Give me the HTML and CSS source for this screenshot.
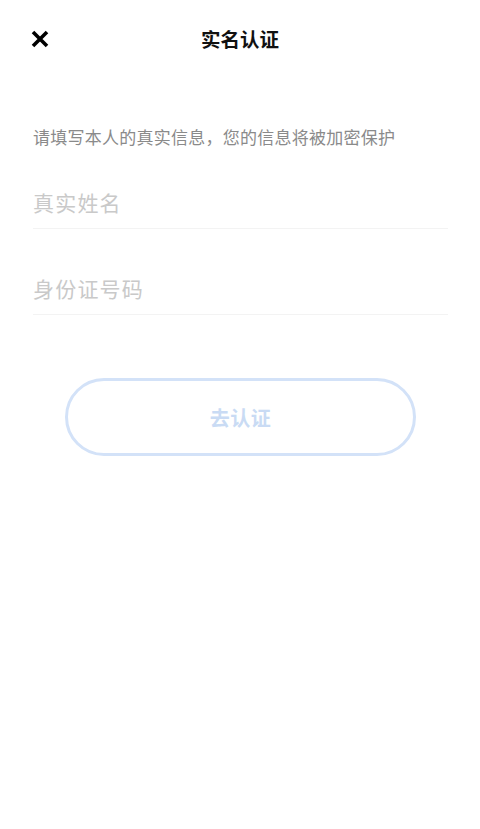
FILE: index.html
```html
<!DOCTYPE html>
<html lang="zh">
<head>
<meta charset="utf-8">
<link rel="stylesheet" href="styles.css">
</head>
<body>
<div class="page">
  <header class="header">
    <button class="close" aria-label="关闭">
      <svg width="18" height="18" viewBox="0 0 18 18"><path d="M2 2 L16 16 M16 2 L2 16" stroke="#000" stroke-width="3.6" stroke-linecap="butt"/></svg>
    </button>
    <h1 class="title">实名认证</h1>
  </header>
  <p class="hint">请填写本人的真实信息，您的信息将被加密保护</p>
  <div class="field"><span class="placeholder">真实姓名</span></div>
  <div class="field"><span class="placeholder">身份证号码</span></div>
  <div class="btn-wrap"><button class="submit">去认证</button></div>
</div>
</body>
</html>
```
FILE: styles.css
```css
* { box-sizing: border-box; }
html, body { margin: 0; padding: 0; background: #fff; }
body { font-family: "Noto Sans CJK SC", "Noto Sans", sans-serif; }
.page { width: 480px; min-height: 829px; }
.header { position: relative; height: 78px; display: flex; align-items: center; justify-content: center; }
.close { position: absolute; left: 31px; top: 30px; width: 18px; height: 18px; padding: 0; border: 0; background: none; display: flex; }
.title { margin: 0; font-size: 19.5px; font-weight: 700; color: #111; line-height: 1; }
.hint { margin: 47px 0 0 33px; font-size: 17px; color: #8a8a8a; line-height: 24px; letter-spacing: 0.25px; }
.field { margin: 0 32px 0 33px; height: 88px; display: flex; align-items: flex-end; padding-bottom: 14px; border-bottom: 1.5px solid #f3f3f3; }
.field:first-of-type { height: 80px; }
.field + .field { height: 86px; }
.placeholder { font-size: 21px; color: #c9c9c9; letter-spacing: 1.2px; line-height: 24px; }
.btn-wrap { display: flex; justify-content: center; margin-top: 63px; padding-left: 1px; }
.submit { width: 351px; height: 78px; border-radius: 39px; border: 3.5px solid #d3e2f8; background: #fff; color: #c9dbf4; font-family: inherit; font-size: 20px; font-weight: 700; letter-spacing: 0.5px; }
```
